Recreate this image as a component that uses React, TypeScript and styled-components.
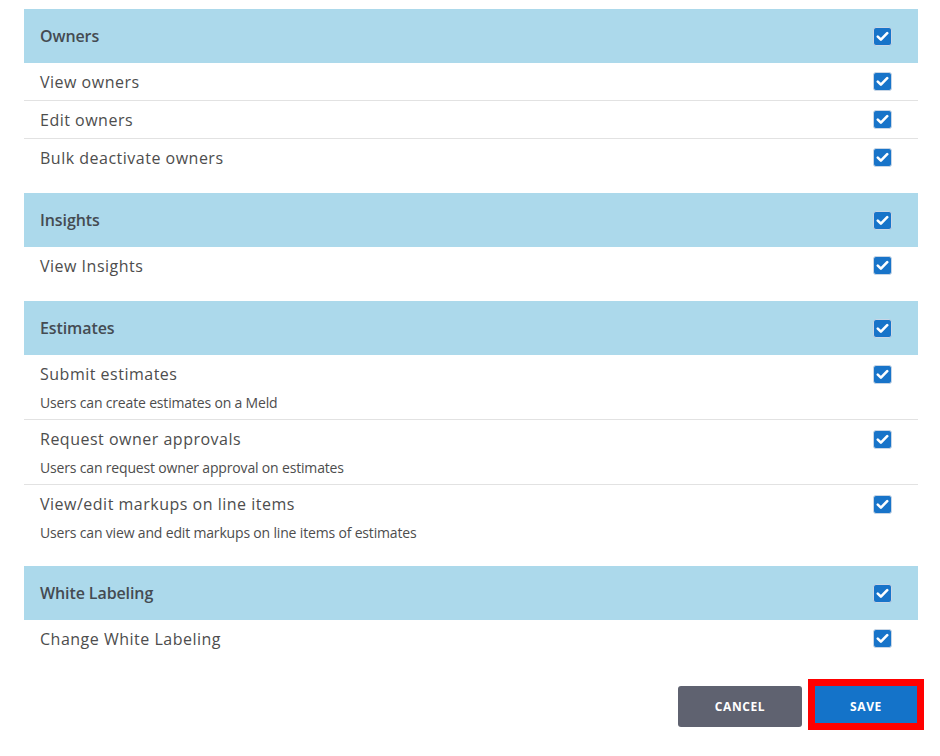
import React from "react";
import styled, { createGlobalStyle } from "styled-components";

const Global = createGlobalStyle`
  html, body { margin: 0; padding: 0; background: #fff; }
  body { font-family: "Open Sans", "Noto Sans", sans-serif; color: #4a4a4a; }
  * { box-sizing: border-box; }
`;

const Page = styled.div`
  padding: 9px 22px 20px 24px;
  width: 940px;
`;

const Group = styled.section`
  margin-bottom: 17px;
  &:last-of-type { margin-bottom: 0; }
`;

const Header = styled.div`
  height: 54px;
  background: #acd9eb;
  display: flex;
  align-items: center;
  justify-content: space-between;
  padding: 0 26px 0 16px;
  font-size: 16px;
  font-weight: 600;
  letter-spacing: -0.1px;
  color: #444b52;
`;

const Row = styled.div`
  padding: 0 26px 0 16px;
  & + & { border-top: 1px solid #e2e2e2; }
`;

const Line = styled.div<{ $sub?: boolean }>`
  display: flex;
  align-items: center;
  justify-content: space-between;
  height: ${(p) => (p.$sub ? "22px" : "37px")};
  margin-top: ${(p) => (p.$sub ? "8px" : "0")};
  font-size: 16px;
  color: #4d4d4d;
  letter-spacing: 0.5px;
`;

const Desc = styled.div`
  font-size: 14px;
  line-height: 20px;
  margin-top: 8px;
  padding-bottom: 6px;
  color: #4d4d4d;
  letter-spacing: -0.17px;
`;

const Box = styled.span`
  width: 19px;
  height: 19px;
  border-radius: 3px;
  background: #1874c9;
  border: 1px solid #c8d6e6;
  display: inline-flex;
  align-items: center;
  justify-content: center;
  flex: none;
`;

const Footer = styled.div`
  display: flex;
  justify-content: flex-end;
  align-items: flex-start;
  gap: 13px;
  margin-top: 29px;
  padding-right: 1px;
`;

const Button = styled.button<{ $primary?: boolean }>`
  border: none;
  border-radius: ${(p) => (p.$primary ? "0" : "3px")};
  width: ${(p) => (p.$primary ? "102px" : "124px")};
  height: ${(p) => (p.$primary ? "37px" : "41px")};
  background: ${(p) => (p.$primary ? "#1473c9" : "#5f6270")};
  color: #fff;
  font-family: "Open Sans", sans-serif;
  font-weight: 700;
  font-size: 12px;
  letter-spacing: 0.6px;
  outline: ${(p) => (p.$primary ? "7px solid #ff0000" : "none")};
  padding: 0;
  padding-top: ${(p) => (p.$primary ? "4px" : "0")};
`;

const Check = () => (
  <Box>
    <svg width="13" height="11" viewBox="0 0 13 11">
      <path d="M1.8 5.6 L4.9 8.6 L11.2 2.2" fill="none" stroke="#fff" strokeWidth="2.6" strokeLinecap="round" strokeLinejoin="round" />
    </svg>
  </Box>
);

type Item = { title: string; desc?: string };
const groups: { name: string; items: Item[] }[] = [
  { name: "Owners", items: [{ title: "View owners" }, { title: "Edit owners" }, { title: "Bulk deactivate owners" }] },
  { name: "Insights", items: [{ title: "View Insights" }] },
  {
    name: "Estimates",
    items: [
      { title: "Submit estimates", desc: "Users can create estimates on a Meld" },
      { title: "Request owner approvals", desc: "Users can request owner approval on estimates" },
      { title: "View/edit markups on line items", desc: "Users can view and edit markups on line items of estimates" },
    ],
  },
  { name: "White Labeling", items: [{ title: "Change White Labeling" }] },
];

export default function App() {
  return (
    <Page>
      <Global />
      {groups.map((g) => (
        <Group key={g.name}>
          <Header>
            <span>{g.name}</span>
            <Check />
          </Header>
          {g.items.map((it) => (
            <Row key={it.title}>
              <Line $sub={!!it.desc}>
                <span>{it.title}</span>
                <Check />
              </Line>
              {it.desc && <Desc>{it.desc}</Desc>}
            </Row>
          ))}
        </Group>
      ))}
      <Footer>
        <Button>CANCEL</Button>
        <Button $primary>SAVE</Button>
      </Footer>
    </Page>
  );
}
